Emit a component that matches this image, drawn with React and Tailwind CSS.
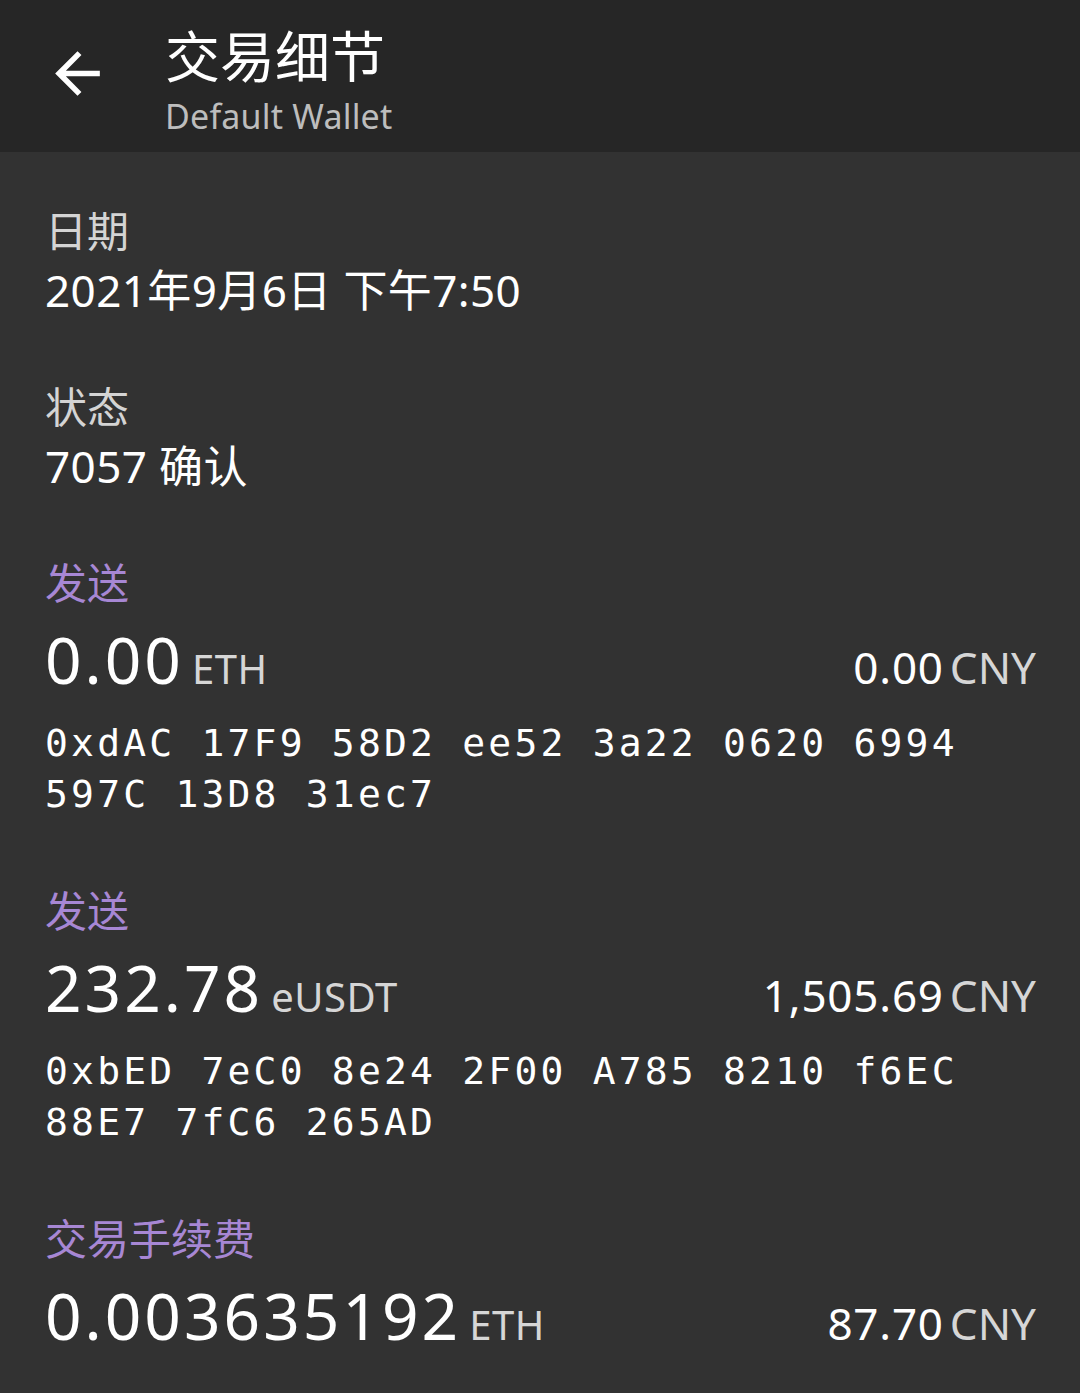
// App.jsx – transaction details screen
const SANS = { fontFamily: '"Noto Sans", "Noto Sans CJK SC", sans-serif' }

function BackArrow() {
  return (
    <svg viewBox="0 0 24 24" className="w-[67px] h-[67px] shrink-0" fill="#ffffff">
      <path d="M20 11H7.83l5.59-5.59L12 4l-8 8 8 8 1.41-1.41L7.83 13H20v-2z" />
    </svg>
  )
}

function Field({ label, value }) {
  return (
    <div>
      <div className="text-[42px] leading-[56px] text-[#d4d4d4]">{label}</div>
      <div className="mt-[3px] text-[44px] leading-[56px] tracking-[0.4px] text-white">{value}</div>
    </div>
  )
}

function Amount({ label, amount, unit, fiat, address }) {
  return (
    <div>
      <div className="text-[42px] leading-[56px] text-[#a787d4]">{label}</div>
      <div className="mt-[9px] flex items-baseline justify-between">
        <div>
          <span className="text-[64px] leading-[80px] tracking-[3px] text-white">{amount}</span>
          <span className="ml-[8px] text-[40px] leading-none tracking-[0.5px] text-[#d6d6d6]">{unit}</span>
        </div>
        <div>
          <span className="text-[44px] leading-none tracking-[0.8px] text-white">{fiat}</span>
          <span className="ml-[6px] text-[44px] leading-none text-[#d6d6d6]">CNY</span>
        </div>
      </div>
      {address && (
        <div
          className="mt-[18px] mb-[2px] text-[38px] leading-[51px] tracking-[3.2px] text-white whitespace-pre-line"
          style={{ fontFamily: '"DejaVu Sans Mono", "Liberation Mono", monospace' }}
        >
          {address}
        </div>
      )}
    </div>
  )
}

export default function App() {
  return (
    <div className="min-h-[1393px] w-full bg-[#323232]" style={SANS}>
      {/* Top bar */}
      <div className="h-[152px] bg-[#262626] flex items-start pl-[44px] pt-[26px]">
        <div className="mt-[14px]"><BackArrow /></div>
        <div className="ml-[54px] flex flex-col">
          <div className="text-[55px] leading-[60px] font-normal text-white">交易细节</div>
          <div className="mt-[8px] text-[34px] leading-[44px] tracking-[0.2px] text-[#bdbdbd]">Default Wallet</div>
        </div>
      </div>

      {/* Details */}
      <div className="pl-[45px] pr-[44px] pt-[51px] flex flex-col gap-[61px]">
        <Field label="日期" value="2021年9月6日 下午7:50" />
        <Field label="状态" value="7057 确认" />
        <Amount
          label="发送"
          amount="0.00"
          unit="ETH"
          fiat="0.00"
          address={'0xdAC 17F9 58D2 ee52 3a22 0620 6994\n597C 13D8 31ec7'}
        />
        <Amount
          label="发送"
          amount="232.78"
          unit="eUSDT"
          fiat="1,505.69"
          address={'0xbED 7eC0 8e24 2F00 A785 8210 f6EC\n88E7 7fC6 265AD'}
        />
        <Amount label="交易手续费" amount="0.003635192" unit="ETH" fiat="87.70" />
      </div>
    </div>
  )
}
